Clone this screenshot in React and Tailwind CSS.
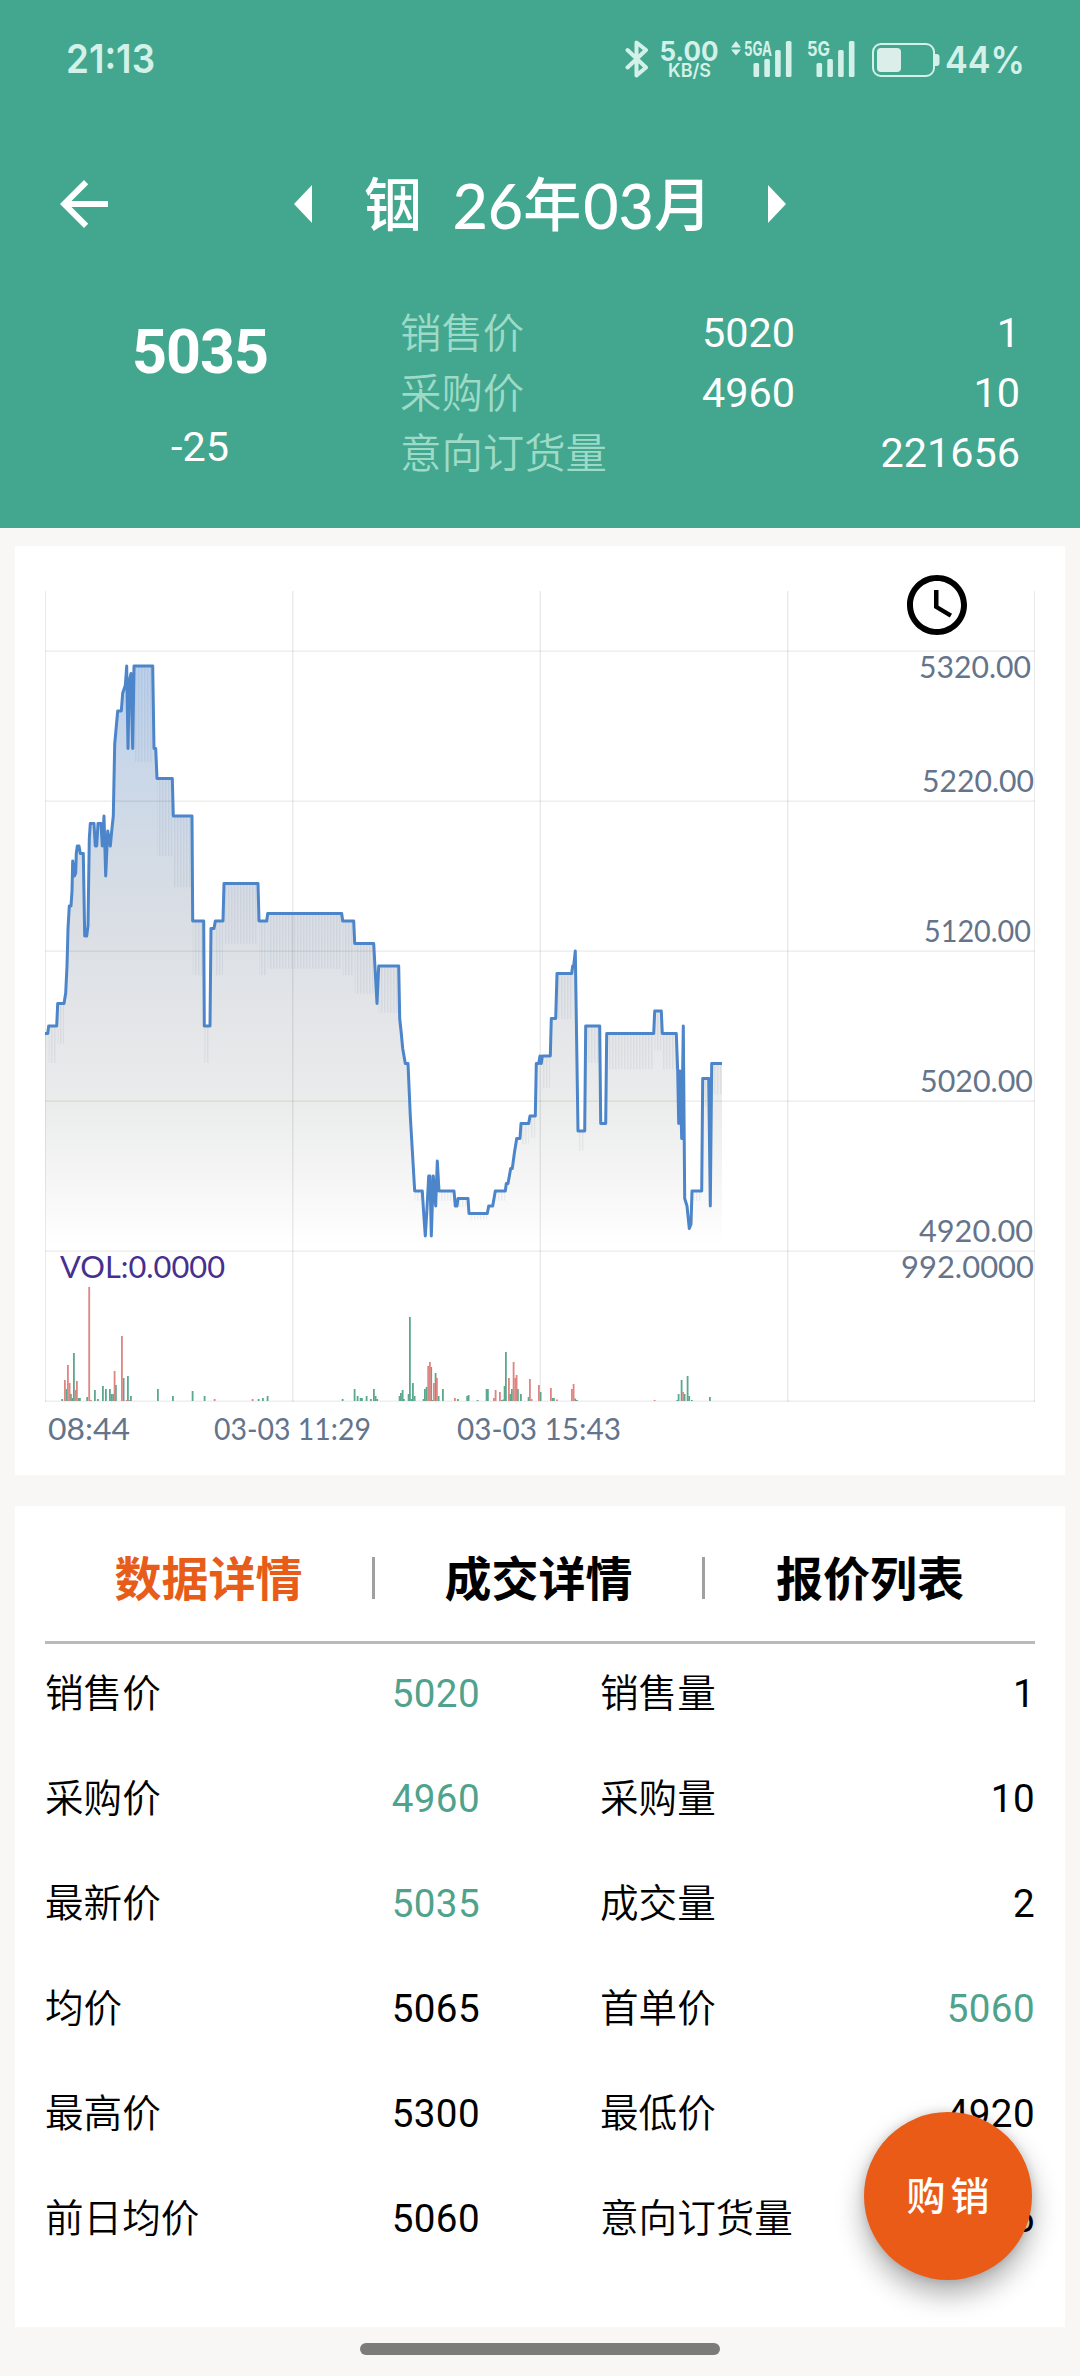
import { MdAccessTime, MdArrowBack } from "react-icons/md";

const GREEN = "#5ba88f";
const RED = "#df8682";

// [x, price]
const PRICES = [
  [0, 5065], [2.7, 5065], [3.7, 5070], [11.7, 5070], [12.7, 5085], [19, 5085], [20.7, 5092], [22, 5110],
  [23, 5135], [24.3, 5150], [26, 5150], [27, 5160], [27.7, 5180], [29.3, 5170], [30.7, 5172], [31.3, 5185],
  [32.3, 5190], [34, 5190], [35.3, 5185], [38.3, 5185], [39.7, 5130], [41.7, 5130], [43, 5137], [44.3, 5195],
  [45.3, 5205], [49, 5205], [50.3, 5190], [51.7, 5190], [53, 5205], [56, 5205], [57.3, 5190], [59, 5210],
  [60.7, 5170], [62.7, 5200], [65.3, 5190], [66.7, 5200], [68.3, 5210], [69.7, 5258], [72.7, 5280],
  [76.3, 5280], [77.7, 5292], [80.3, 5297], [81.7, 5310], [83, 5255], [84.3, 5300], [86, 5305], [87.7, 5255],
  [89, 5310], [107.7, 5310], [109, 5255], [110.7, 5255], [112, 5235], [127.3, 5235], [128.3, 5210],
  [147, 5210], [147.7, 5140], [158.7, 5140], [159.3, 5070], [165, 5070], [166, 5135], [169, 5135],
  [170.3, 5140], [178, 5140], [179, 5165], [213, 5165], [214, 5140], [221.7, 5140], [222.7, 5145],
  [296.7, 5145], [297.7, 5140], [308.7, 5140], [309.7, 5125], [328.7, 5125], [332, 5085], [333.7, 5110],
  [353.7, 5110], [354.7, 5075], [356.3, 5065], [357.7, 5055], [360.3, 5045], [363, 5045], [365.3, 5010],
  [369.7, 4960], [377.3, 4960], [378.7, 4945], [380.3, 4930], [381.7, 4945], [383.7, 4970], [385, 4970],
  [386.3, 4930], [388.3, 4970], [390.7, 4950], [392.3, 4980], [394, 4960], [409, 4960], [410.3, 4950],
  [412, 4950], [413, 4955], [423, 4955], [424, 4945], [442.3, 4945], [443.7, 4950], [447.7, 4950],
  [450.3, 4960], [460.3, 4960], [461.3, 4965], [463, 4965], [465.7, 4975], [467.3, 4975], [469.3, 4985],
  [471.7, 4995], [475, 4995], [476, 5005], [483.7, 5005], [485, 5010], [490.3, 5010], [491.3, 5045],
  [493.7, 5045], [495, 5050], [496.3, 5045], [497.3, 5050], [505.3, 5050], [506.3, 5075], [510.7, 5075],
  [512, 5105], [526.7, 5105], [527.7, 5110], [528.7, 5110], [530.3, 5120], [533, 5000], [539.7, 5000],
  [540.7, 5070], [554.7, 5070], [555.7, 5005], [560.7, 5005], [561.7, 5065], [608.7, 5065], [609.7, 5080],
  [616.3, 5080], [617.3, 5065], [631.3, 5065], [632.7, 5040], [633.7, 5005], [635, 5040], [636.7, 4995],
  [638.3, 5070], [639.7, 4955], [642, 4950], [644.3, 4935], [646, 4938], [647, 4960], [656.7, 4960],
  [657.7, 5035], [663.7, 5035], [665.3, 4950], [666.7, 5045], [677, 5045],
];

// [x, height], split by direction
const VOLUME_DOWN = [
  [17.3, 2], [21.7, 12], [26, 7], [27.7, 3], [29, 48], [34, 3], [35, 3], [42.3, 4], [50, 11], [53, 2], [58, 15],
  [61, 12], [65, 12], [66.7, 7], [68.3, 7], [71, 16], [78.7, 23], [83, 25], [86, 5], [113, 12], [128, 5],
  [147.7, 10], [159.7, 5], [213.7, 2], [218, 3], [222.7, 5], [297.7, 2], [309.7, 12], [312.7, 5], [315.7, 3],
  [317, 3], [321.7, 5], [326, 2], [329, 12], [330.7, 5], [332.3, 2], [354.7, 5], [356, 8], [357.7, 11],
  [359, 2], [363.7, 7], [365, 84], [366.7, 2], [368, 18], [369.7, 5], [378.7, 2], [380, 12], [381.7, 14],
  [386.3, 34], [387.7, 1], [390.7, 28], [393.7, 5], [398, 12], [413, 2], [422.3, 5], [423.7, 6], [432.7, 1],
  [441.7, 12], [443, 12], [456.7, 1], [458.3, 1.5], [459.7, 15], [461, 49], [465.3, 7], [467, 12], [473, 12],
  [476, 7], [483.7, 4], [495.7, 9], [507.7, 3], [509, 3], [530.3, 2.5], [532, 1], [632.3, 1], [633.7, 7],
  [636.7, 21], [639.7, 7], [642.7, 25], [644.3, 5], [647, 1], [665, 4],
];
const VOLUME_UP = [
  [20, 21], [23, 36], [24.7, 18], [30.7, 11], [32, 20], [44.3, 114], [46, 1], [69.7, 30], [77, 65], [81.7, 1],
  [84.3, 1], [169.7, 2], [207.7, 2], [383.3, 35], [385, 39], [389, 18], [392, 23], [410, 3], [449, 3],
  [450.7, 11], [455, 9], [464, 23], [468.7, 39], [470.3, 23], [471.7, 26], [485, 22], [486.7, 2], [494, 16],
  [506, 13], [512, 1.5], [527, 12], [528.7, 17], [609.7, 1], [638.3, 9],
];

const Y_LABELS = [
  [986, 76, 112, "5320.00"],
  [989, 190, 112, "5220.00"],
  [986, 340, 107, "5120.00"],
  [988, 490, 113, "5020.00"],
  [988, 640, 114, "4920.00"],
  [989, 676, 133, "992.0000"],
];

const DETAILS = [
  ["销售价", "5020", true, "销售量", "1", false],
  ["采购价", "4960", true, "采购量", "10", false],
  ["最新价", "5035", true, "成交量", "2", false],
  ["均价", "5065", false, "首单价", "5060", true],
  ["最高价", "5300", false, "最低价", "4920", false],
  ["前日均价", "5060", false, "意向订货量", "221656", false],
];

const toY = (price) => 60 + (5320 - price) * 1.5;

const line = PRICES.map(([x, p]) => `${x},${toY(p)}`).join(" ");

// flat stretches of the price line get a faint striped shade underneath
const flats = PRICES.slice(1)
  .map(([x, p], i) => ({ from: PRICES[i][0], to: x, same: PRICES[i][1] === p, y: toY(p) }))
  .filter((s) => s.same && s.to - s.from > 5);

function Signal({ label, labelWidth, arrows }) {
  const start = arrows ? 22.5 : 9.5;
  return (
    <svg width={arrows ? 61 : 48} height="38" className="overflow-visible fill-[#d3f1e8]">
      {arrows && <path d="M0 7.5 5 1l5 6.5zM0 9.500h10L5 15.500z" />}
      <text
        x={arrows ? 13 : 0}
        y="16"
        fontSize="20"
        textLength={labelWidth}
        lengthAdjust="spacingAndGlyphs"
        className="font-bold"
      >
        {label}
      </text>
      {[14, 18, 27, 36].map((h, i) => (
        <rect key={h} x={start + i * 10.8} y={37 - h} width="5.600" height={h} rx="1.5" />
      ))}
    </svg>
  );
}

function StatusBar() {
  return (
    <div className="flex h-[120px] items-start pl-[66px] pr-[54px] font-[Inter,sans-serif] text-[#d3f1e8]">
      <svg width="90" height="56" className="mt-[30px] overflow-visible fill-current">
        <text x="0" y="42.500" fontSize="40" textLength="89" lengthAdjust="spacingAndGlyphs" className="font-semibold">
          21:13
        </text>
      </svg>
      <div className="ml-auto mt-[40px] flex h-[38px] items-start">
        <svg width="24" height="38" fill="none" stroke="currentColor" strokeWidth="4" strokeLinejoin="round" strokeLinecap="round">
          <path d="M2.500 10 21 27.500 11.500 35.500V2.500L21 10 2.500 27.500" />
        </svg>
        <svg width="60" height="38" className="ml-[10px] overflow-visible fill-current">
          <text x="0.500" y="20.500" fontSize="27" textLength="59" lengthAdjust="spacingAndGlyphs" className="font-bold">
            5.00
          </text>
          <text x="9" y="37" fontSize="18.500" textLength="43" lengthAdjust="spacingAndGlyphs" className="font-semibold">
            KB/S
          </text>
        </svg>
        <div className="ml-[12px]">
          <Signal label="5GA" labelWidth={28} arrows />
        </div>
        <div className="ml-[15px]">
          <Signal label="5G" labelWidth={23} />
        </div>
        <svg width="68" height="36" className="ml-[17px] mt-[3px]">
          <rect x="1" y="1" width="61" height="32" rx="8" fill="none" stroke="currentColor" strokeWidth="2" />
          <rect x="5" y="5" width="24" height="24" rx="4" fill="#dbeeea" />
          <path d="M63 11h1.500a3 3 0 0 1 3 3v6a3 3 0 0 1-3 3H63z" fill="currentColor" />
        </svg>
        <svg width="81" height="38" className="ml-[5px] overflow-visible fill-current">
          <text x="0" y="33" fontSize="37" textLength="80" lengthAdjust="spacingAndGlyphs" className="font-semibold">
            44%
          </text>
        </svg>
      </div>
    </div>
  );
}

function Quote({ label, price, amount }) {
  return (
    <div className="flex h-[60px] items-center">
      <span className="w-[235px] whitespace-nowrap pt-[2px] font-[350] text-[#9ddbc8]">{label}</span>
      <span className="w-[160px] text-right">{price}</span>
      <span className="flex-1 text-right">{amount}</span>
    </div>
  );
}

function Header() {
  return (
    <header className="h-[528px] bg-[#42a78e] text-white">
      <StatusBar />
      <div className="flex h-[168px] items-center pl-[48px]">
        <MdArrowBack size={72} />
        <svg width="18" height="38" className="ml-[174px] fill-white">
          <path d="M18 0v38L0 19z" />
        </svg>
        <h1 className="ml-[52px] flex h-[72px] w-[348px] items-center justify-between whitespace-nowrap pt-[3px] text-[58px] font-medium leading-[72px]">
          <span>铟</span>
          <span className="flex items-center">
            <span className="font-[Lato,sans-serif] text-[61px]">26</span>年
            <span className="ml-[2px] font-[Lato,sans-serif] text-[61px]">03</span>月
          </span>
        </h1>
        <svg width="18" height="38" className="ml-[56px] fill-white">
          <path d="M0 0v38l18-19z" />
        </svg>
      </div>
      <div className="flex pt-[15px]">
        <div className="flex w-[400px] flex-col items-center">
          <div className="mt-[13px] h-[72px] text-[61px] font-bold leading-[72px] tracking-[-1px]">5035</div>
          <div className="mt-[29px] h-[60px] text-[41.400px] leading-[60px]">-25</div>
        </div>
        <div className="w-[620px] text-[41.400px]">
          <Quote label="销售价" price="5020" amount="1" />
          <Quote label="采购价" price="4960" amount="10" />
          <Quote label="意向订货量" amount="221656" />
        </div>
      </div>
    </header>
  );
}

function Chart() {
  return (
    <section className="relative mx-[15px] mt-[18px] h-[929px] bg-white pl-[30px] pt-[45px]">
      <svg width="1000" height="870" className="font-[Lato,sans-serif]">
        <defs>
          <linearGradient id="area" gradientUnits="userSpaceOnUse" x1="0" y1="75" x2="0" y2="655">
            <stop offset="0" stopColor="#bbd0ec" />
            <stop offset="0.2" stopColor="#cbd8e8" />
            <stop offset="0.4" stopColor="#d8dde4" />
            <stop offset="0.6" stopColor="#e3e5e8" />
            <stop offset="0.76" stopColor="#ebecec" />
            <stop offset="0.88" stopColor="#f5f5f5" />
            <stop offset="1" stopColor="#ffffff" />
          </linearGradient>
          <pattern id="stripes" width="3" height="3" patternUnits="userSpaceOnUse">
            <rect width="1.5" height="3" fill="#274a70" fillOpacity="0.07" />
          </pattern>
        </defs>
        <polygon points={`0,660 ${line} 677,660`} fill="url(#area)" />
        {flats.map((s) => (
          <rect
            key={s.from}
            x={s.from}
            y={s.y}
            width={s.to - s.from}
            height={(660 - s.y) * 0.164}
            fill="url(#stripes)"
          />
        ))}
        <g fill="#000" fillOpacity="0.08">
          {[0, 247, 494.5, 742, 989].map((x) => (
            <rect key={x} x={x} y="0" width={x % 989 ? 1.5 : 1} height="811" />
          ))}
          {[60, 210, 360, 510, 660, 810].map((y) => (
            <rect key={y} x="0" y={y - 0.5} width="990" height="1.3" />
          ))}
        </g>
        <polyline points={line} fill="none" stroke="#4c85c9" strokeWidth="3" strokeLinejoin="round" />
        <g fill={GREEN}>
          {VOLUME_DOWN.map(([x, h]) => (
            <rect key={x} x={x - 1} y={810 - h} width="1.800" height={h} />
          ))}
        </g>
        <g fill={RED}>
          {VOLUME_UP.map(([x, h]) => (
            <rect key={x} x={x - 1} y={810 - h} width="1.800" height={h} />
          ))}
        </g>
        <g fontSize="30.500" fill="#64748b">
          {Y_LABELS.map(([x, y, w, text]) => (
            <text key={text} x={x - w} y={y + 11} textLength={w} lengthAdjust="spacingAndGlyphs">
              {text}
            </text>
          ))}
          <text x="3" y="849" textLength="82" lengthAdjust="spacingAndGlyphs">08:44</text>
          <text x="169" y="849" textLength="157" lengthAdjust="spacingAndGlyphs">03-03 11:29</text>
          <text x="412" y="849" textLength="164" lengthAdjust="spacingAndGlyphs">03-03 15:43</text>
          <text x="15" y="687" fill="#46308f" textLength="165" lengthAdjust="spacingAndGlyphs">VOL:0.0000</text>
        </g>
      </svg>
      <MdAccessTime size={72} className="absolute left-[886px] top-[23px] text-black" />
    </section>
  );
}

function Details() {
  return (
    <section className="mx-[15px] mt-[31px] h-[821px] bg-white px-[30px] text-black">
      <div className="flex h-[138px] items-center border-b-[3px] border-[#bababa] pt-[9px] text-[47px] font-bold">
        <div className="w-[327px] pt-[4px] text-center text-[#e75c19]">数据详情</div>
        <div className="h-[42px] w-[3px] bg-[#a0a0a0]" />
        <div className="w-[327px] pt-[4px] text-center">成交详情</div>
        <div className="h-[42px] w-[3px] bg-[#a0a0a0]" />
        <div className="flex-1 pt-[4px] text-center">报价列表</div>
      </div>
      <div className="-mt-[3px]">
        {DETAILS.map(([left, leftValue, leftGreen, right, rightValue, rightGreen]) => (
          <div key={left} className="flex h-[105px] items-center text-[38.600px]">
            <span className="font-[350]">{left}</span>
            <span className={leftGreen ? "ml-auto tracking-[0.4px] text-[#4fa28b]" : "ml-auto tracking-[0.4px]"}>
              {leftValue}
            </span>
            <div className="ml-[120px] flex w-[435px] items-center justify-between">
              <span className="font-[350]">{right}</span>
              <span className={rightGreen ? "tracking-[0.4px] text-[#4fa28b]" : "tracking-[0.4px]"}>{rightValue}</span>
            </div>
          </div>
        ))}
      </div>
    </section>
  );
}

export default function App() {
  return (
    <div className="relative h-[2376px] w-[1080px] overflow-hidden bg-[#f8f7f5] font-[Roboto,'Noto_Sans_CJK_SC',sans-serif]">
      <Header />
      <Chart />
      <Details />
      <div className="mx-auto mt-[16px] h-[12px] w-[360px] rounded-full bg-[#7b7b7a]" />
      <button className="absolute left-[864px] top-[2112px] h-[168px] w-[168px] rounded-full bg-[#ea5b18] pl-[5px] pt-[3px] text-[39px] font-medium tracking-[5px] text-white shadow-[0_14px_28px_rgba(0,0,0,0.32),0_0_10px_rgba(0,0,0,0.14)]">
        购销
      </button>
    </div>
  );
}
